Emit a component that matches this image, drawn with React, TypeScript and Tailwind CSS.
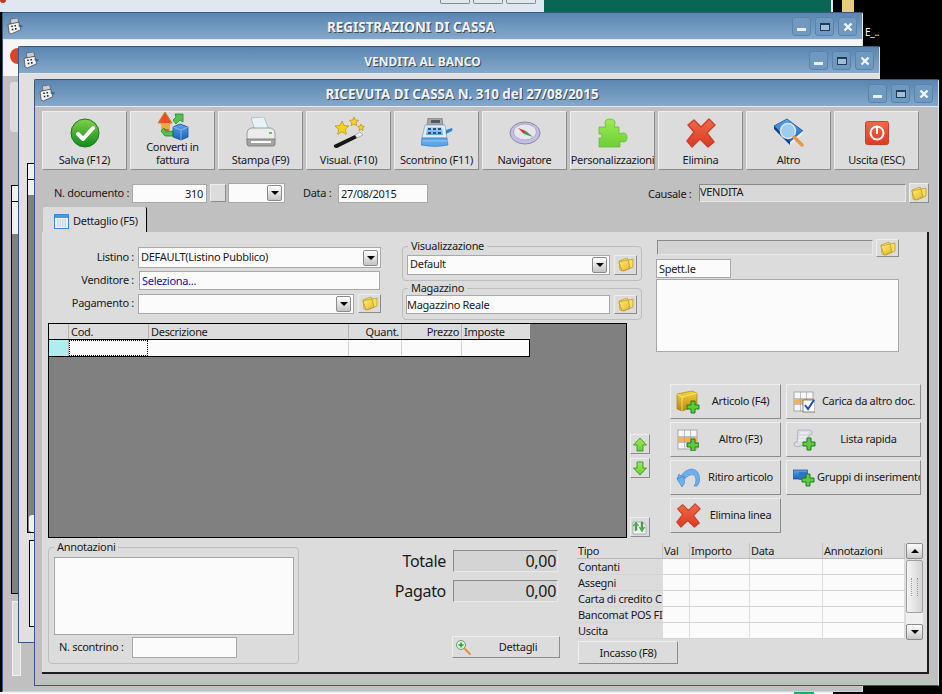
import React from "react";

// gradients shared by the icons below
const IconDefs = () => (
  <svg className="absolute w-0 h-0">
    <defs>
      <linearGradient id="gGreen" x1="0" y1="0" x2="0" y2="1">
        <stop offset="0" stopColor="#7fd04a" />
        <stop offset="1" stopColor="#0f8a1c" />
      </linearGradient>
      <linearGradient id="gRed" x1="0" y1="0" x2="0" y2="1">
        <stop offset="0" stopColor="#f2694a" />
        <stop offset="1" stopColor="#d93a22" />
      </linearGradient>
      <linearGradient id="gBlue" x1="0" y1="0" x2="0" y2="1">
        <stop offset="0" stopColor="#5aa6ea" />
        <stop offset="1" stopColor="#1c5fb5" />
      </linearGradient>
      <linearGradient id="gPuzzle" x1="0" y1="0" x2="0" y2="1">
        <stop offset="0" stopColor="#9cec52" />
        <stop offset="1" stopColor="#6ccf36" />
      </linearGradient>
      <linearGradient id="gFolder" x1="0" y1="0" x2="1" y2="1">
        <stop offset="0" stopColor="#fff07a" />
        <stop offset="1" stopColor="#e3b52a" />
      </linearGradient>
      <linearGradient id="gGold" x1="0" y1="0" x2="0" y2="1">
        <stop offset="0" stopColor="#f5d33a" />
        <stop offset="1" stopColor="#b98710" />
      </linearGradient>
      <linearGradient id="gKeys" x1="0" y1="0" x2="0" y2="1">
        <stop offset="0" stopColor="#b9d4f0" />
        <stop offset="1" stopColor="#5ba7e8" />
      </linearGradient>
    </defs>
  </svg>
);

const PlusBadge = ({ x, y }: { x: number; y: number }) => (
  <path
    transform={`translate(${x} ${y})`}
    d="M4 0h4v4h4v4H8v4H4V8H0V4h4z"
    fill="#5ccb3c"
    stroke="#1f7a24"
    strokeWidth="1"
  />
);

const SaveIcon = () => (
  <svg width="30" height="30" viewBox="0 0 30 30">
    <circle cx="15" cy="15" r="14" fill="url(#gGreen)" stroke="#1a7a1f" />
    <path d="M8 16l5 5 10-11" fill="none" stroke="#fff" strokeWidth="4" strokeLinecap="round" strokeLinejoin="round" />
  </svg>
);

const ConvertIcon = () => (
  <svg width="32" height="30" viewBox="0 0 32 30">
    <path d="M8 1l7 11h-3v8H5v-8H1z" fill="#ef4a2a" stroke="#c8861c" strokeWidth="1" />
    <path d="M5 12h7v6H5z" fill="#f5a83a" />
    <path d="M18 3h8v8l-3-2-4 4-3-4 3-3z" fill="#55c24a" stroke="#1f8a2c" strokeWidth="0.8" />
    <path d="M4 20l4 5h8v-5l-7 1-2-4z" fill="#55c24a" stroke="#1f8a2c" strokeWidth="0.8" />
    <path d="M16 16l7-3 8 3v10l-7 3-8-3z" fill="url(#gBlue)" stroke="#1a4f96" strokeWidth="0.8" />
    <path d="M16 16l8 3 7-3M24 19v10" fill="none" stroke="#8fc4f2" strokeWidth="0.8" />
  </svg>
);

const PrinterIcon = () => (
  <svg width="32" height="32" viewBox="0 0 32 32">
    <path d="M6 1l13-1 5 13H10z" fill="#e8f3f8" stroke="#9fb3bd" strokeWidth="0.7" />
    <path d="M2 16q0-4 4-5h20q4 1 4 5v7H2z" fill="#ececec" stroke="#8a8a8a" strokeWidth="0.8" />
    <path d="M2 22h28v5q0 2-2 2H4q-2 0-2-2z" fill="#a4a4a4" stroke="#757575" strokeWidth="0.8" />
    <path d="M6 24h20v2H6z" fill="#fafafa" />
    <rect x="24" y="15" width="3" height="2" fill="#63c663" />
  </svg>
);

const WandIcon = () => (
  <svg width="32" height="32" viewBox="0 0 32 32">
    <path d="M1 28l21-10 2 3L4 31q-4 0-3-3z" fill="#161616" />
    <path d="M22 18l5-3 3 3-6 3z" fill="#ececec" stroke="#777" strokeWidth="0.5" />
    <path d="M9 4l2 4.500 5 .5-3.700 3.300 1 5-4.300-2.500-4.300 2.500 1-5L2 9l5-.5z" fill="#f6d21f" stroke="#b88e10" strokeWidth="0.7" />
    <path d="M21 0l1.300 3 3.200.4-2.300 2.200.6 3.100-2.800-1.600-2.800 1.600.6-3.100-2.300-2.200 3.200-.4z" fill="#f6d21f" stroke="#b88e10" strokeWidth="0.7" />
    <path d="M28 7l1 2.200 2.400.3-1.700 1.600.4 2.300-2.100-1.100-2.100 1.100.4-2.300-1.700-1.600 2.400-.3z" fill="#f6d21f" stroke="#b88e10" strokeWidth="0.7" />
  </svg>
);

const RegisterIcon = () => (
  <svg width="32" height="30" viewBox="0 0 32 30">
    <path d="M7 0h14l1 7H6z" fill="#a6a6a6" stroke="#6a6a6a" strokeWidth="0.6" />
    <path d="M10 2h9v3h-9z" fill="#4c5a66" />
    <path d="M4 7h20l2 13H1z" fill="#e4edf6" stroke="#7ea6d0" strokeWidth="0.8" />
    <path d="M6 9h15l1 8H5z" fill="url(#gKeys)" />
    <path d="M7 10h3v2H7zM12 10h3v2h-3zM17 10h3v2h-3zM7 14h3v2H7zM12 14h3v2h-3zM17 14h3v2h-3z" fill="#21508c" />
    <path d="M1 20h25l1 7q-13 3-27 0z" fill="#5ba7e8" stroke="#2f74bd" strokeWidth="0.6" />
    <path d="M1 23h26" stroke="#a8d2f5" strokeWidth="0.8" />
    <path d="M25 12l6-2q1 2 0 3l-6 3z" fill="#2a86d8" />
  </svg>
);

const CompassIcon = () => (
  <svg width="32" height="26" viewBox="0 0 32 26">
    <ellipse cx="16" cy="13" rx="15" ry="11" fill="#c3bfe0" stroke="#8b87a8" />
    <ellipse cx="16" cy="12" rx="11.500" ry="8" fill="#e7e5ee" stroke="#9a97b4" strokeWidth="0.7" />
    <path d="M9 8l8 3-2 3z" fill="#d8352a" />
    <path d="M17 11l7 6-9-3z" fill="#3f9a45" />
  </svg>
);

const PuzzleIcon = () => (
  <svg width="30" height="30" viewBox="0 0 30 30">
    <path
      d="M1 9h7q-1-2-1-4 0-4 5-4t5 4q0 2-1 4h5v7q2-1 4-1 4 0 4 4.500t-4 4.500q-2 0-3-1v6H1v-9q3 1 3-2t-3-2z"
      fill="url(#gPuzzle)"
      stroke="#6cb838"
      strokeWidth="0.8"
    />
  </svg>
);

const CrossIcon = ({ size = 30 }: { size?: number }) => (
  <svg width={size} height={size} viewBox="0 0 30 30">
    <path
      d="M8 2l7 7 8-8 6 6-8 8 7 9-6 5-8-8-8 8-5-6 7-9-6-7z"
      fill="url(#gRed)"
      stroke="#c9412a"
      strokeWidth="1.400"
      strokeLinejoin="round"
    />
  </svg>
);

const BookIcon = () => (
  <svg width="32" height="30" viewBox="0 0 32 30">
    <path d="M1 8L14 1l16 12-13 11z" fill="url(#gBlue)" stroke="#124d96" strokeWidth="0.8" />
    <path d="M1 8v3l16 16v-3z" fill="#0e3f86" />
    <path d="M17 24l13-11v3L17 27z" fill="#e6eef6" />
    <circle cx="15" cy="13" r="7.500" fill="#9cccf2" stroke="#dde6ee" strokeWidth="1.600" />
    <path d="M21 19l8 8" stroke="#e8954a" strokeWidth="3.400" strokeLinecap="round" />
  </svg>
);

const PowerIcon = () => (
  <svg width="24" height="24" viewBox="0 0 24 24">
    <rect x="0.500" y="0.500" width="23" height="23" rx="2" fill="url(#gRed)" stroke="#c9412a" />
    <circle cx="12" cy="12" r="6.500" fill="none" stroke="#fff" strokeWidth="2" />
    <path d="M12 6v7" stroke="#fff" strokeWidth="2" />
  </svg>
);

const FolderIcon = () => (
  <svg width="16" height="15" viewBox="0 0 16 15">
    <path d="M1 4l8-3 1 2 5-1 0 8-9 4-4-1z" fill="#f6dd5a" stroke="#b99526" strokeWidth="0.7" />
    <path d="M1 5l9-2 2 8-8 3z" fill="url(#gFolder)" stroke="#b99526" strokeWidth="0.7" />
  </svg>
);

const CubePlusIcon = () => (
  <svg width="24" height="24" viewBox="0 0 24 24">
    <path d="M1 4l15-3 5 2v13L6 21l-5-2z" fill="url(#gGold)" stroke="#9b7510" strokeWidth="0.6" />
    <path d="M1 4l5 3 15-4M6 7v14" fill="none" stroke="#fff2a0" strokeWidth="0.7" />
    <PlusBadge x={11} y={11} />
  </svg>
);

const TableIcon = ({ badge }: { badge: "plus" | "check" }) => (
  <svg width="22" height="22" viewBox="0 0 22 22">
    <rect x="1" y="1" width="19" height="19" fill="#f7f7f7" stroke="#9a9a9a" strokeWidth="0.8" />
    <path d="M1 8h19v5H1z" fill="#f6b150" />
    <path d="M1 7.500h19M1 13.500h19M7.500 1v19M13.500 1v19" stroke="#9a9a9a" strokeWidth="0.6" />
    {badge === "plus" ? (
      <PlusBadge x={10} y={10} />
    ) : (
      <>
        <rect x="10" y="9" width="12" height="12" fill="#fff" stroke="#555" strokeWidth="0.7" />
        <path d="M12 14l3 4 6-9" fill="none" stroke="#1f4fb5" strokeWidth="2" />
      </>
    )}
  </svg>
);

const ScrollIcon = () => (
  <svg width="24" height="22" viewBox="0 0 24 22">
    <path d="M6 1h12q3 1 2 4l-3 1-1 9-11 3q-4-1-3-4l3-1z" fill="#dcdce6" stroke="#a3a3b2" strokeWidth="0.7" />
    <path d="M8 4h8M7 8h7M6 11h7" stroke="#fafafa" strokeWidth="1" />
    <PlusBadge x={11} y={9} />
  </svg>
);

const UndoIcon = () => (
  <svg width="24" height="20" viewBox="0 0 24 20">
    <path
      d="M1 11l7-3 .5 3Q13 6 17 6.500 20 7.500 20 12q0 4-2 6h3q3-3 2.500-8Q23 2 16 1 9 1.500 5 8L3 6z"
      fill="#6db0ee"
      stroke="#3d80c8"
      strokeWidth="0.6"
    />
    <path d="M1 11l5 8 2.500-4L8 8z" fill="#6db0ee" stroke="#3d80c8" strokeWidth="0.6" />
  </svg>
);

const GroupsIcon = () => (
  <svg width="22" height="18" viewBox="0 0 22 18">
    <rect x="0.500" y="1" width="14" height="9" fill="url(#gBlue)" stroke="#1a4f96" strokeWidth="0.7" />
    <rect x="6" y="3" width="9" height="8" fill="#2f74c4" />
    <PlusBadge x={9} y={5} />
  </svg>
);

const ArrowIcon = ({ down }: { down?: boolean }) => (
  <svg width="14" height="15" viewBox="0 0 14 15">
    <path
      d={down ? "M4 1h6v6h3.500L7 14 .5 7H4z" : "M7 1l6.500 7H10v6H4V8H.5z"}
      fill="url(#gPuzzle)"
      stroke="#2e8a24"
      strokeWidth="0.8"
    />
  </svg>
);

const SyncIcon = () => (
  <svg width="16" height="16" viewBox="0 0 16 16">
    <path d="M1 3h9l4 3v9H1z" fill="#f5f7fa" stroke="#8a9aa8" strokeWidth="0.7" />
    <path d="M3 12V6l-2 1 3-4 3 4-2-1v5z" fill="#49b24a" stroke="#1f7a24" strokeWidth="0.4" />
    <path d="M11 3v6l2-1-3 5-3-5 2 1V3z" fill="#49b24a" stroke="#1f7a24" strokeWidth="0.4" />
  </svg>
);

const ZoomPlusIcon = () => (
  <svg width="16" height="16" viewBox="0 0 16 16">
    <circle cx="6" cy="6" r="4.500" fill="#d9f2d9" stroke="#6d9a78" />
    <path d="M6 3.500v5M3.500 6h5" stroke="#2b9a35" strokeWidth="1.400" />
    <path d="M10 10l5 5" stroke="#e8954a" strokeWidth="2.400" strokeLinecap="round" />
  </svg>
);

const CalendarIcon = () => (
  <svg width="15" height="15" viewBox="0 0 15 15">
    <rect x="0.500" y="0.500" width="14" height="14" fill="#eef3fb" stroke="#3d86d8" />
    <rect x="1" y="1" width="13" height="3" fill="#4c96e4" />
    <path d="M3 6h9M3 8h9M3 10h9M3 12h9" stroke="#aeb9e0" strokeWidth="1" strokeDasharray="1.500 1" />
  </svg>
);

const AppIcon = () => (
  <svg width="17" height="17" viewBox="0 0 16 16">
    <path d="M3 1l7-1 1 4-7 2z" fill="#c9ccd0" stroke="#444" strokeWidth="0.5" />
    <path d="M1 6l10-2 2 7-9 4-2-1z" fill="#eef0f2" stroke="#333" strokeWidth="0.6" />
    <path d="M4 7h1.500v1.500H4zM7 6.500h1.500V8H7zM4.500 10H6v1.500H4.500zM7.500 9.500H9V11H7.500z" fill="#22303c" />
    <path d="M11 6l4 1-1 2-3-1z" fill="#3d6a8c" />
  </svg>
);

const WinButtons = () => (
  <div className="flex gap-[4px] mt-[1px]">
    {["min", "max", "close"].map((k) => (
      <div
        key={k}
        className="w-[19px] h-[19px] rounded-[3px] border border-[#5a83ab] bg-[#7099c1] flex items-center justify-center"
      >
        {k === "min" && <div className="w-[9px] h-[3px] mt-[5px] bg-[#e8edf2]" />}
        {k === "max" && <div className="w-[10px] h-[8px] border border-t-2 border-[#1f3c5a] bg-[#a4bed6]" />}
        {k === "close" && (
          <svg width="10" height="10" viewBox="0 0 10 10">
            <path d="M1.500 1.500l7 7M8.500 1.500l-7 7" stroke="#f2f5f8" strokeWidth="2.400" />
          </svg>
        )}
      </div>
    ))}
  </div>
);

const TitleBar = ({ title, extra }: { title: string; extra: string }) => (
  <div className="h-[27px] shrink-0 bg-gradient-to-b from-[#5a86b1] to-[#85a8ca] flex items-center pl-[4px] pr-[5px] border-b border-[#e4e9ee]">
    <AppIcon />
    <div
      className={`flex-1 text-center pt-[3px] font-bold tracking-normal text-[#f2f2f2] [text-shadow:1px_1px_0_#3c4a58] ${extra}`}
    >
      {title}
    </div>
    <WinButtons />
  </div>
);

const raised = "bg-[#dcdcdc] border border-t-[#eeeeee] border-l-[#eeeeee] border-r-[#8c8c8c] border-b-[#8c8c8c]";
const sunken = "bg-[#fbfbfb] border border-[#a8a8a8]";
const readonly = "bg-[#d4d4d4] border border-[#e8e8e8] border-t-[#8a8a8a] border-l-[#8a8a8a]";

const ToolButton = ({ icon, label }: { icon: React.ReactNode; label: React.ReactNode }) => (
  <div className={`w-[85px] h-[59px] flex flex-col items-center overflow-hidden whitespace-nowrap pb-[3px] ${raised}`}>
    <div className="flex-1 flex items-center justify-center min-h-0">{icon}</div>
    <div className="leading-[13px] text-center">{label}</div>
  </div>
);

const ComboArrow = () => (
  <div className="w-[15px] h-[16px] rounded-[2px] bg-gradient-to-b from-[#ffffff] to-[#c4c4c4] border border-[#8a8a8a] flex items-center justify-center">
    <div className="w-0 h-0 border-x-[4px] border-x-transparent border-t-[4px] border-t-black" />
  </div>
);

const Combo = ({ className, text }: { className: string; text?: string }) => (
  <div className={`flex items-center pl-[2px] pr-[2px] ${sunken} ${className}`}>
    <span className="flex-1 whitespace-nowrap overflow-hidden">{text}</span>
    <ComboArrow />
  </div>
);

const FolderButton = ({ className }: { className: string }) => (
  <div className={`flex items-center justify-center ${raised} ${className}`}>
    <FolderIcon />
  </div>
);

const ActionButton = ({ icon, label, w }: { icon: React.ReactNode; label: string; w: string }) => (
  <div className={`h-[35px] flex items-center pl-[4px] whitespace-nowrap overflow-hidden ${raised} ${w}`}>
    <div className="w-[26px] shrink-0 flex justify-center">{icon}</div>
    <div className="flex-1 text-center">{label}</div>
  </div>
);

const GroupBox = ({ label, className, children }: { label: string; className: string; children: React.ReactNode }) => (
  <div className={`relative border border-[#bdbdbd] rounded-[4px] ${className}`}>
    <span className="absolute -top-[8px] left-[5px] bg-[#dcdcdc] px-[3px] leading-[13px]">{label}</span>
    {children}
  </div>
);

const gridCols = [
  { w: "w-[20px]", t: "" },
  { w: "w-[80px]", t: "Cod." },
  { w: "w-[200px]", t: "Descrizione" },
  { w: "w-[53px]", t: "Quant.", right: true },
  { w: "w-[60px]", t: "Prezzo", right: true },
  { w: "w-[67px]", t: "Imposte" },
];

const payCols = [
  { w: "w-[86px]", t: "Tipo" },
  { w: "w-[27px]", t: "Val" },
  { w: "w-[60px]", t: "Importo" },
  { w: "w-[73px]", t: "Data" },
  { w: "w-[82px]", t: "Annotazioni" },
];

const payRows = ["Contanti", "Assegni", "Carta di credito C", "Bancomat POS FI", "Uscita"];

const DocumentGrid = () => (
  <div className="w-[579px] h-[215px] bg-[#808080] border border-black">
    <div className="flex w-[481px] h-[16px] border-b border-black bg-[#dcdcdc] leading-[15px]">
      {gridCols.map((c, i) => (
        <div
          key={i}
          className={`${c.w} px-[2px] border-r border-[#b5b5b5] ${c.right ? "text-right" : ""} ${i === 5 ? "border-r-0" : ""}`}
        >
          {c.t}
        </div>
      ))}
    </div>
    <div className="flex w-[481px] h-[17px] border-b border-r border-black bg-[#fbfbfb]">
      <div className="w-[20px] bg-[#aeeeee] border-r border-[#b5b5b5]" />
      <div className="w-[79px] border border-dotted border-black" />
      <div className="w-[201px] border-r border-[#d0d0d0]" />
      <div className="w-[53px] border-r border-[#d0d0d0]" />
      <div className="w-[60px] border-r border-[#d0d0d0]" />
    </div>
  </div>
);

const PaymentGrid = () => (
  <div className="flex h-[97px]">
    <div className="w-[328px]">
      <div className="flex h-[16px] bg-[#dcdcdc] leading-[15px] border-b border-[#b8b8b8]">
        {payCols.map((c, i) => (
          <div key={i} className={`${c.w} px-[1px] border-r border-[#c4c4c4]`}>
            {c.t}
          </div>
        ))}
      </div>
      {payRows.map((r) => (
        <div key={r} className="flex h-[16px] leading-[15px] bg-[#fbfbfb] border-b border-[#d4d4d4]">
          <div className="w-[86px] px-[1px] bg-[#dcdcdc] whitespace-nowrap overflow-hidden">{r}</div>
          {payCols.slice(1).map((c, i) => (
            <div key={i} className={`${c.w} border-r border-[#dedede]`} />
          ))}
        </div>
      ))}
    </div>
    <div className="w-[17px] ml-[1px] flex flex-col">
      <div className="h-[16px] rounded-[2px] border border-[#8a8a8a] bg-gradient-to-b from-[#ffffff] to-[#c8c8c8] flex items-center justify-center">
        <div className="w-0 h-0 border-x-[4px] border-x-transparent border-b-[4px] border-b-black" />
      </div>
      <div className="h-[53px] mt-[1px] rounded-[2px] border border-[#a0a0a0] bg-gradient-to-r from-[#f4f4f4] to-[#d4d4d4] flex items-center justify-center">
        <div className="w-[7px] h-[18px] border-x border-dotted border-[#9a9a9a]" />
      </div>
      <div className="flex-1 bg-[#f0f0f0]" />
      <div className="h-[16px] rounded-[2px] border border-[#8a8a8a] bg-gradient-to-b from-[#ffffff] to-[#c8c8c8] flex items-center justify-center">
        <div className="w-0 h-0 border-x-[4px] border-x-transparent border-t-[4px] border-t-black" />
      </div>
    </div>
  </div>
);

const MainWindow = () => (
  <div className="absolute left-[34px] top-[79px] w-[905px] h-[607px] flex flex-col bg-[#c0c0c0] border border-[#37587c] border-r-[#dfe4ea] rounded-t-[2px]">
    <TitleBar title="RICEVUTA DI CASSA N. 310 del 27/08/2015" extra="text-[13.400px]" />

    {/* toolbar */}
    <div className="flex gap-[3px] pl-[7px] pt-[4px]">
      <ToolButton icon={<SaveIcon />} label="Salva (F12)" />
      <ToolButton
        icon={<ConvertIcon />}
        label={
          <>
            Converti in
            <br />
            fattura
          </>
        }
      />
      <ToolButton icon={<PrinterIcon />} label="Stampa (F9)" />
      <ToolButton icon={<WandIcon />} label="Visual. (F10)" />
      <ToolButton icon={<RegisterIcon />} label="Scontrino (F11)" />
      <ToolButton icon={<CompassIcon />} label="Navigatore" />
      <ToolButton icon={<PuzzleIcon />} label="Personalizzazioni" />
      <ToolButton icon={<CrossIcon />} label="Elimina" />
      <ToolButton icon={<BookIcon />} label="Altro" />
      <ToolButton icon={<PowerIcon />} label="Uscita (ESC)" />
    </div>

    {/* document header */}
    <div className="flex items-center h-[20px] mt-[13px] pl-[19px] whitespace-nowrap">
      <span className="w-[78px]">N. documento :</span>
      <div className={`w-[75px] h-[19px] text-right pr-[3px] leading-[18px] ${sunken}`}>310</div>
      <div className={`w-[16px] h-[18px] ml-[3px] ${raised}`} />
      <Combo className="w-[57px] h-[20px] ml-[2px]" />
      <span className="ml-[18px] w-[35px]">Data :</span>
      <div className={`w-[90px] h-[19px] pl-[2px] leading-[18px] ${sunken}`}>27/08/2015</div>
      <span className="ml-[220px] w-[51px] mt-[3px]">Causale :</span>
      <div className={`w-[207px] h-[18px] leading-[13px] bg-[#d8d8d8] ${readonly}`}>VENDITA</div>
      <FolderButton className="w-[20px] h-[20px] ml-[3px]" />
    </div>

    {/* tab strip */}
    <div className="h-[25px] mt-[4px] ml-[8px] flex items-end">
      <div className="w-[104px] h-[25px] pt-[3px] bg-[#dcdcdc] border-r border-black rounded-tl-[3px] rounded-tr-[2px] flex items-center pl-[11px] gap-[4px]">
        <CalendarIcon />
        <span>Dettaglio (F5)</span>
      </div>
    </div>

    {/* tab body */}
    <div className="ml-[7px] w-[887px] h-[442px] bg-[#dcdcdc] border-r-2 border-b-2 border-[#1d1d1d] flex flex-col pl-[6px] pt-[6px]">
      <div className="flex h-[305px]">
        {/* left: form + document lines */}
        <div className="w-[608px] flex flex-col">
          <div className="flex h-[85px]">
            <div className="w-[355px] flex flex-col pt-[9px]">
              <div className="flex items-center h-[21px]">
                <span className="w-[90px] text-right pr-[4px]">Listino :</span>
                <Combo className="w-[243px] h-[21px]" text="DEFAULT(Listino Pubblico)" />
              </div>
              <div className="flex items-center h-[20px] mt-[2px]">
                <span className="w-[91px] text-right pr-[5px]">Venditore :</span>
                <div className={`w-[241px] h-[19px] pl-[2px] leading-[18px] text-[#1010b0] ${sunken}`}>Seleziona...</div>
              </div>
              <div className="flex items-center h-[21px] mt-[3px]">
                <span className="w-[90px] text-right pr-[4px]">Pagamento :</span>
                <Combo className="w-[216px] h-[20px]" />
                <FolderButton className="w-[23px] h-[19px] ml-[4px]" />
              </div>
            </div>
            <div className="w-[240px] ml-[-1px] flex flex-col pt-[7px]">
              <GroupBox label="Visualizzazione" className="h-[35px] flex items-center pl-[4px] pt-[2px] mt-[1px]">
                <Combo className="w-[203px] h-[20px]" text="Default" />
                <FolderButton className="w-[23px] h-[20px] ml-[4px]" />
              </GroupBox>
              <GroupBox label="Magazzino" className="h-[32px] flex items-center pl-[3px] mt-[7px]">
                <div className={`w-[204px] h-[19px] leading-[18px] ${sunken}`}>Magazzino Reale</div>
                <FolderButton className="w-[23px] h-[19px] ml-[4px]" />
              </GroupBox>
            </div>
          </div>
          <div className="flex">
            <DocumentGrid />
            <div className="h-[215px] ml-[3px] flex flex-col">
              <div className={`w-[20px] h-[20px] mt-[111px] flex items-center justify-center ${raised}`}>
                <ArrowIcon />
              </div>
              <div className={`w-[20px] h-[20px] mt-[4px] flex items-center justify-center ${raised}`}>
                <ArrowIcon down />
              </div>
              <div className={`w-[20px] h-[20px] mt-[39px] flex items-center justify-center ${raised}`}>
                <SyncIcon />
              </div>
            </div>
          </div>
        </div>

        {/* right: customer + actions */}
        <div className="flex-1 flex flex-col">
          <div className="flex items-start h-[19px]">
            <div className={`w-[216px] h-[15px] mt-[2px] ml-[1px] ${readonly}`} />
            <FolderButton className="w-[23px] h-[18px] ml-[3px] mt-[1px]" />
          </div>
          <div className={`w-[75px] h-[19px] mt-[2px] pl-[2px] leading-[18px] ${sunken}`}>Spett.le</div>
          <div className={`w-[243px] h-[73px] mt-[1px] ${sunken}`} />
          <div className="grid grid-cols-[111px_135px] gap-x-[5px] gap-y-[3px] ml-[14px] mt-[32px]">
            <ActionButton icon={<CubePlusIcon />} label="Articolo (F4)" w="w-[111px]" />
            <ActionButton icon={<TableIcon badge="check" />} label="Carica da altro doc." w="w-[135px]" />
            <ActionButton icon={<TableIcon badge="plus" />} label="Altro (F3)" w="w-[111px]" />
            <ActionButton icon={<ScrollIcon />} label="Lista rapida" w="w-[135px]" />
            <ActionButton icon={<UndoIcon />} label="Ritiro articolo" w="w-[111px]" />
            <ActionButton icon={<GroupsIcon />} label="Gruppi di inserimento" w="w-[135px]" />
            <ActionButton icon={<CrossIcon size={25} />} label="Elimina linea" w="w-[111px]" />
          </div>
        </div>
      </div>

      {/* footer */}
      <div className="flex">
        <GroupBox label="Annotazioni" className="w-[251px] h-[117px] mt-[4px] flex flex-col pl-[5px] pt-[9px]">
          <div className={`w-[240px] h-[78px] ${sunken}`} />
          <div className="flex items-center mt-[2px]">
            <span className="w-[78px] pl-[5px] whitespace-nowrap">N. scontrino :</span>
            <div className={`w-[105px] h-[21px] ${sunken}`} />
          </div>
        </GroupBox>
        <div className="w-[260px] flex flex-col items-end pr-[1px]">
          <div className="flex items-center mt-[6px] h-[23px] text-[16px]">
            <span className="mr-[7px]">Totale</span>
            <div className={`w-[105px] h-[22px] text-right pr-[1px] leading-[21px] ${readonly}`}>0,00</div>
          </div>
          <div className="flex items-center mt-[7px] h-[23px] text-[16px]">
            <span className="mr-[7px]">Pagato</span>
            <div className={`w-[105px] h-[22px] text-right pr-[1px] leading-[21px] ${readonly}`}>0,00</div>
          </div>
          <div className={`w-[108px] h-[22px] mt-[34px] -mr-[2px] flex items-center pl-[2px] ${raised}`}>
            <ZoomPlusIcon />
            <span className="flex-1 text-center pl-[6px]">Dettagli</span>
          </div>
        </div>
        <div className="ml-[18px] flex flex-col">
          <PaymentGrid />
          <div className={`w-[100px] h-[23px] mt-[1px] ml-[1px] leading-[21px] text-center ${raised}`}>Incasso (F8)</div>
        </div>
      </div>
    </div>
  </div>
);

export default function App() {
  return (
    <div className="relative w-[942px] h-[694px] overflow-hidden bg-black text-[11px] tracking-[-0.3px] text-[#1a1a1a] font-['Noto_Sans',sans-serif]">
      <IconDefs />

      {/* desktop behind the windows */}
      <div className="absolute left-0 top-0 w-[544px] h-[12px] bg-[#dfe8f0] flex justify-end items-start gap-[3px] pr-[8px]">
        <div className="w-[30px] h-[4px] border border-t-0 border-[#8a8a8a] rounded-b-[2px]" />
        <div className="w-[30px] h-[4px] border border-t-0 border-[#8a8a8a] rounded-b-[2px]" />
        <div className="w-[30px] h-[4px] border border-t-0 border-[#8a8a8a] rounded-b-[2px]" />
      </div>
      <div className="absolute left-0 top-0 w-[6px] h-[3px] rounded-b-full bg-[#c8342a]" />
      <div className="absolute left-[544px] top-0 w-[289px] h-[12px] bg-[#0b6555] border-r-2 border-[#dfe8f0]" />
      <div className="absolute left-[842px] top-0 w-[12px] h-[12px] bg-[#e4cd7a]" />
      <div className="absolute left-0 top-[692px] w-[833px] h-[2px] bg-[#f5f5f5]" />
      <div className="absolute left-[794px] top-[692px] w-[20px] h-[2px] bg-[#18b060]" />
      <span className="absolute left-[865px] top-[27px] text-[10px] text-white leading-none">E_..</span>

      {/* window 1, furthest back */}
      <div className="absolute left-[2px] top-[12px] w-[861px] h-[680px] flex flex-col bg-[#c0c0c0] border border-[#37587c] border-r-[#dfe4ea] border-b-[#c8d2dc] rounded-t-[2px]">
        <TitleBar title="REGISTRAZIONI DI CASSA" extra="text-[13.400px] pl-[6px]" />
        <div className="h-[36px] bg-[#f6f6f6]" />
        <div className="flex-1 relative">
          <div className="absolute left-[7px] -top-[28px] w-[10px] h-[16px] rounded-l-full bg-[#d8442a]" />
          <div className="absolute left-[7px] top-[6px] w-[10px] h-[50px] rounded-l-[3px] bg-[#dcdcdc]" />
          <div className="absolute left-[8px] top-[109px] w-[10px] h-[409px] bg-[#808080] border border-black">
            <div className="h-[16px] bg-[#f0f0f0] border-b border-black" />
            <div className="h-[32px] bg-[#f0f0f0]" />
          </div>
          <div className="absolute left-[9px] top-[525px] w-[9px] h-[75px] bg-[#dcdcdc] border border-[#f0f0f0]" />
        </div>
      </div>

      {/* window 2 */}
      <div className="absolute left-[18px] top-[46px] w-[862px] h-[597px] flex flex-col bg-[#c0c0c0] border border-[#37587c] border-r-[#dfe4ea] border-b-[#37587c] rounded-t-[2px]">
        <TitleBar title="VENDITA AL BANCO" extra="text-[12px] pr-[4px]" />
        <div className="flex-1 bg-[#e0e0e0] relative">
          <div className="absolute left-[8px] top-[89px] w-[8px] h-[370px] bg-[#808080] border border-black">
            <div className="h-[16px] bg-[#f0f0f0] border-b border-black" />
            <div className="h-[15px] bg-[#f0f0f0]" />
          </div>
          <div className="absolute left-[10px] top-[441px] w-[6px] h-[17px] rounded-l-[3px] bg-[#f0f0f0]" />
          <div className="absolute left-[10px] top-[466px] w-[6px] h-[87px] bg-[#f0f0f0] border-l border-y border-black" />
        </div>
      </div>

      <MainWindow />
    </div>
  );
}
